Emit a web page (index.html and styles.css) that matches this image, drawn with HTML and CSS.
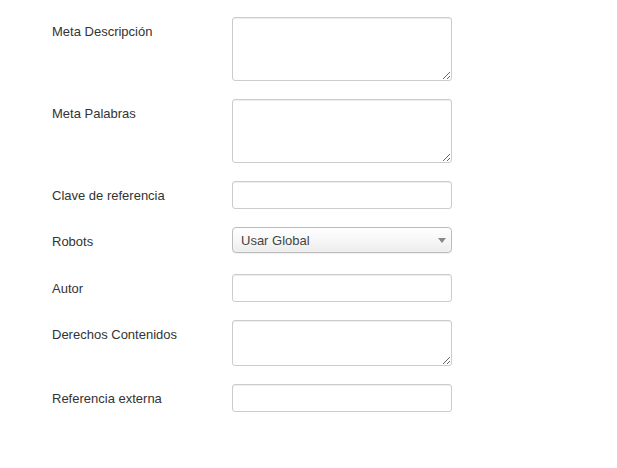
FILE: index.html
```html
<!DOCTYPE html>
<html lang="es">
<head>
<meta charset="utf-8">
<title>Metadatos</title>
<link rel="stylesheet" href="styles.css">
</head>
<body>
<form class="form">
  <div class="group">
    <label class="label">Meta Descripción</label>
    <div class="controls"><textarea class="field area-lg"></textarea></div>
  </div>
  <div class="group">
    <label class="label">Meta Palabras</label>
    <div class="controls"><textarea class="field area-lg"></textarea></div>
  </div>
  <div class="group">
    <label class="label">Clave de referencia</label>
    <div class="controls"><input class="field input" type="text"></div>
  </div>
  <div class="group">
    <label class="label">Robots</label>
    <div class="controls">
      <div class="select-wrap">
        <select class="select"><option>Usar Global</option></select>
        <span class="arrow"></span>
      </div>
    </div>
  </div>
  <div class="group">
    <label class="label">Autor</label>
    <div class="controls"><input class="field input" type="text"></div>
  </div>
  <div class="group">
    <label class="label">Derechos Contenidos</label>
    <div class="controls"><textarea class="field area-sm"></textarea></div>
  </div>
  <div class="group">
    <label class="label">Referencia externa</label>
    <div class="controls"><input class="field input" type="text"></div>
  </div>
</form>
</body>
</html>
```
FILE: styles.css
```css
html, body {
  margin: 0;
  padding: 0;
  background: #fff;
}
body {
  font-family: "Liberation Sans", Arial, sans-serif;
  font-size: 13px;
  line-height: 18px;
  color: #333;
}
.form {
  padding: 17px 0 0 52px;
  display: flex;
  flex-direction: column;
  gap: 18px;
}
.group {
  display: flex;
  align-items: flex-start;
}
.label {
  width: 180px;
  padding-top: 6px;
  flex: none;
}
.controls {
  display: flex;
}
.field {
  box-sizing: border-box;
  width: 220px;
  margin: 0;
  border: 1px solid #ccc;
  border-radius: 3px;
  box-shadow: inset 0 1px 1px rgba(0, 0, 0, 0.075);
  font-family: inherit;
  font-size: 13px;
  color: #555;
  background: #fff;
  padding: 4px 6px;
  outline: none;
}
.area-lg {
  height: 64px;
  display: block;
}
.area-sm {
  height: 46px;
  display: block;
}
.input {
  height: 28px;
  display: block;
}
.select-wrap {
  position: relative;
  width: 220px;
  height: 29px;
}
.select {
  appearance: none;
  -webkit-appearance: none;
  display: block;
  box-sizing: border-box;
  width: 220px;
  height: 26px;
  margin: 0;
  border: 1px solid #bbb;
  border-radius: 4px;
  background: linear-gradient(#ffffff 0%, #f8f8f8 45%, #ececec 100%);
  box-shadow: 0 0 2px #fff inset, 0 1px 1px rgba(0, 0, 0, 0.06);
  font-family: inherit;
  font-size: 13px;
  color: #444;
  padding: 0 8px;
  outline: none;
}
.arrow {
  position: absolute;
  right: 6px;
  top: 11px;
  width: 0;
  height: 0;
  border-left: 4px solid transparent;
  border-right: 4px solid transparent;
  border-top: 5px solid #888;
}
```
